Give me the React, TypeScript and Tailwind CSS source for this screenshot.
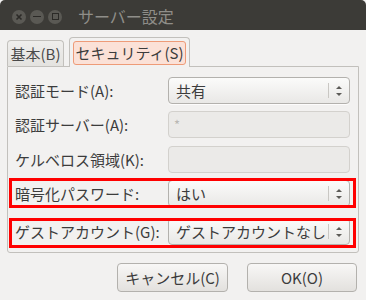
import type { ReactNode } from "react";

const font = { fontFamily: '"Noto Sans CJK JP", "Noto Sans", sans-serif' };

function Spinner() {
  return (
    <svg width="8" height="14" viewBox="0 0 8 14" className="shrink-0">
      <path d="M1 5 L4 2 L7 5 Z" fill="#5c5b57" />
      <path d="M1 9 L4 12 L7 9 Z" fill="#5c5b57" />
    </svg>
  );
}

function Combo({ value }: { value: string }) {
  return (
    <div className="flex h-[27px] w-[182px] items-center rounded-[4px] border border-[#b3b1ad] bg-gradient-to-b from-[#fbfbfa] to-[#e9e8e6] shadow-[0_1px_0_rgba(255,255,255,0.8)]">
      <span className="min-w-0 flex-1 whitespace-nowrap pl-[7px] text-[15px] leading-[20px] text-[#3c3c3c]">{value}</span>
      <div className="h-[15px] w-px bg-[#c9c7c3]" />
      <div className="flex w-[20px] justify-center">
        <Spinner />
      </div>
    </div>
  );
}

function Entry({ text }: { text?: string }) {
  return (
    <div className="flex h-[27px] w-[182px] items-center rounded-[4px] border border-[#d3d1cd] bg-[#ebeae8] pl-[5px]">
      {text && <span className="text-[13px] leading-[16px] text-[#b9b7b3]">{text}</span>}
    </div>
  );
}

function Row({ label, children, className = "" }: { label: string; children: ReactNode; className?: string }) {
  return (
    <div className={`flex items-center ${className}`}>
      <span className="w-[153px] whitespace-nowrap text-[15px] leading-[20px] text-[#3c3c3c]">{label}</span>
      {children}
    </div>
  );
}

function WinButton({ children }: { children: ReactNode }) {
  return (
    <div className="flex h-[14px] w-[14px] items-center justify-center rounded-full bg-[#5a5954]">
      {children}
    </div>
  );
}

export default function App() {
  return (
    <div className="relative h-[300px] w-[366px] overflow-hidden bg-[#f2f1f0]" style={font}>
      {/* title bar */}
      <div className="flex h-[30px] items-center rounded-t-[5px] bg-[#3c3b37]">
        <div className="ml-[12px] flex gap-[4px] pt-[3px]">
          <WinButton>
            <svg width="8" height="8" viewBox="0 0 8 8">
              <path d="M1.5 1.5 L6.5 6.5 M6.5 1.5 L1.5 6.5" stroke="#2b2a27" strokeWidth="1.6" />
            </svg>
          </WinButton>
          <WinButton>
            <div className="h-[1.5px] w-[8px] bg-[#2b2a27]" />
          </WinButton>
          <WinButton>
            <div className="h-[7px] w-[7px] border-[1.5px] border-[#2b2a27]" />
          </WinButton>
        </div>
        <span className="ml-[16px] pt-[2px] text-[16px] leading-[20px] text-[#8f8e89]">サーバー設定</span>
      </div>

      {/* tabs */}
      <div className="flex items-end gap-[5px] px-[7px] pt-[7px]">
        <div className="flex h-[26px] w-[57px] items-center justify-center rounded-t-[4px] border border-b-0 border-[#c2c0bc] bg-gradient-to-b from-[#efeeec] to-[#e4e3e0] text-[15px] leading-[20px] text-[#4a4a4a]">
          基本(B)
        </div>
        <div className="relative z-10 -mb-px flex h-[30px] w-[121px] items-start justify-center rounded-t-[4px] border border-b-0 border-[#c2c0bc] bg-[#f2f1f0] pt-[3px]">
          <div className="flex h-[24px] w-[113px] items-center justify-center rounded-[3px] border border-[#ee9b78] bg-[#fbe1d7] text-[15px] leading-[20px] text-[#3c3c3c]">
            セキュリティ(S)
          </div>
        </div>
      </div>

      {/* page */}
      <div className="mx-[7px] flex flex-col gap-[7px] rounded-b-[3px] border border-[#c2c0bc] pb-[7px] pl-[7px] pt-[10px]">
        <Row label="認証モード(A):">
          <Combo value="共有" />
        </Row>
        <Row label="認証サーバー(A):">
          <Entry text="*" />
        </Row>
        <Row label="ケルベロス領域(K):" className="mt-[1px]">
          <Entry />
        </Row>
        <Row label="暗号化パスワード:">
          <Combo value="はい" />
        </Row>
        <Row label="ゲストアカウント(G):" className="mt-[4px]">
          <Combo value="ゲストアカウントなし" />
        </Row>
      </div>

      {/* buttons */}
      <div className="mt-[10px] flex justify-end gap-[19px] pr-[9px]">
        <button className="flex h-[29px] w-[111px] items-center justify-center rounded-[4px] border border-[#b3b1ad] bg-gradient-to-b from-[#f8f7f6] to-[#e3e1de] text-[15px] leading-[20px] text-[#3c3c3c]">
          キャンセル(C)
        </button>
        <button className="flex h-[29px] w-[110px] items-center justify-center rounded-[4px] border border-[#b3b1ad] bg-gradient-to-b from-[#f8f7f6] to-[#e3e1de] text-[15px] leading-[20px] text-[#3c3c3c]">
          OK(O)
        </button>
      </div>

      {/* annotation boxes */}
      <div className="absolute left-[9px] top-[178px] h-[30px] w-[347px] border-[3px] border-[#ff0000]" />
      <div className="absolute left-[9px] top-[218px] h-[30px] w-[347px] border-[3px] border-[#ff0000]" />
    </div>
  );
}
